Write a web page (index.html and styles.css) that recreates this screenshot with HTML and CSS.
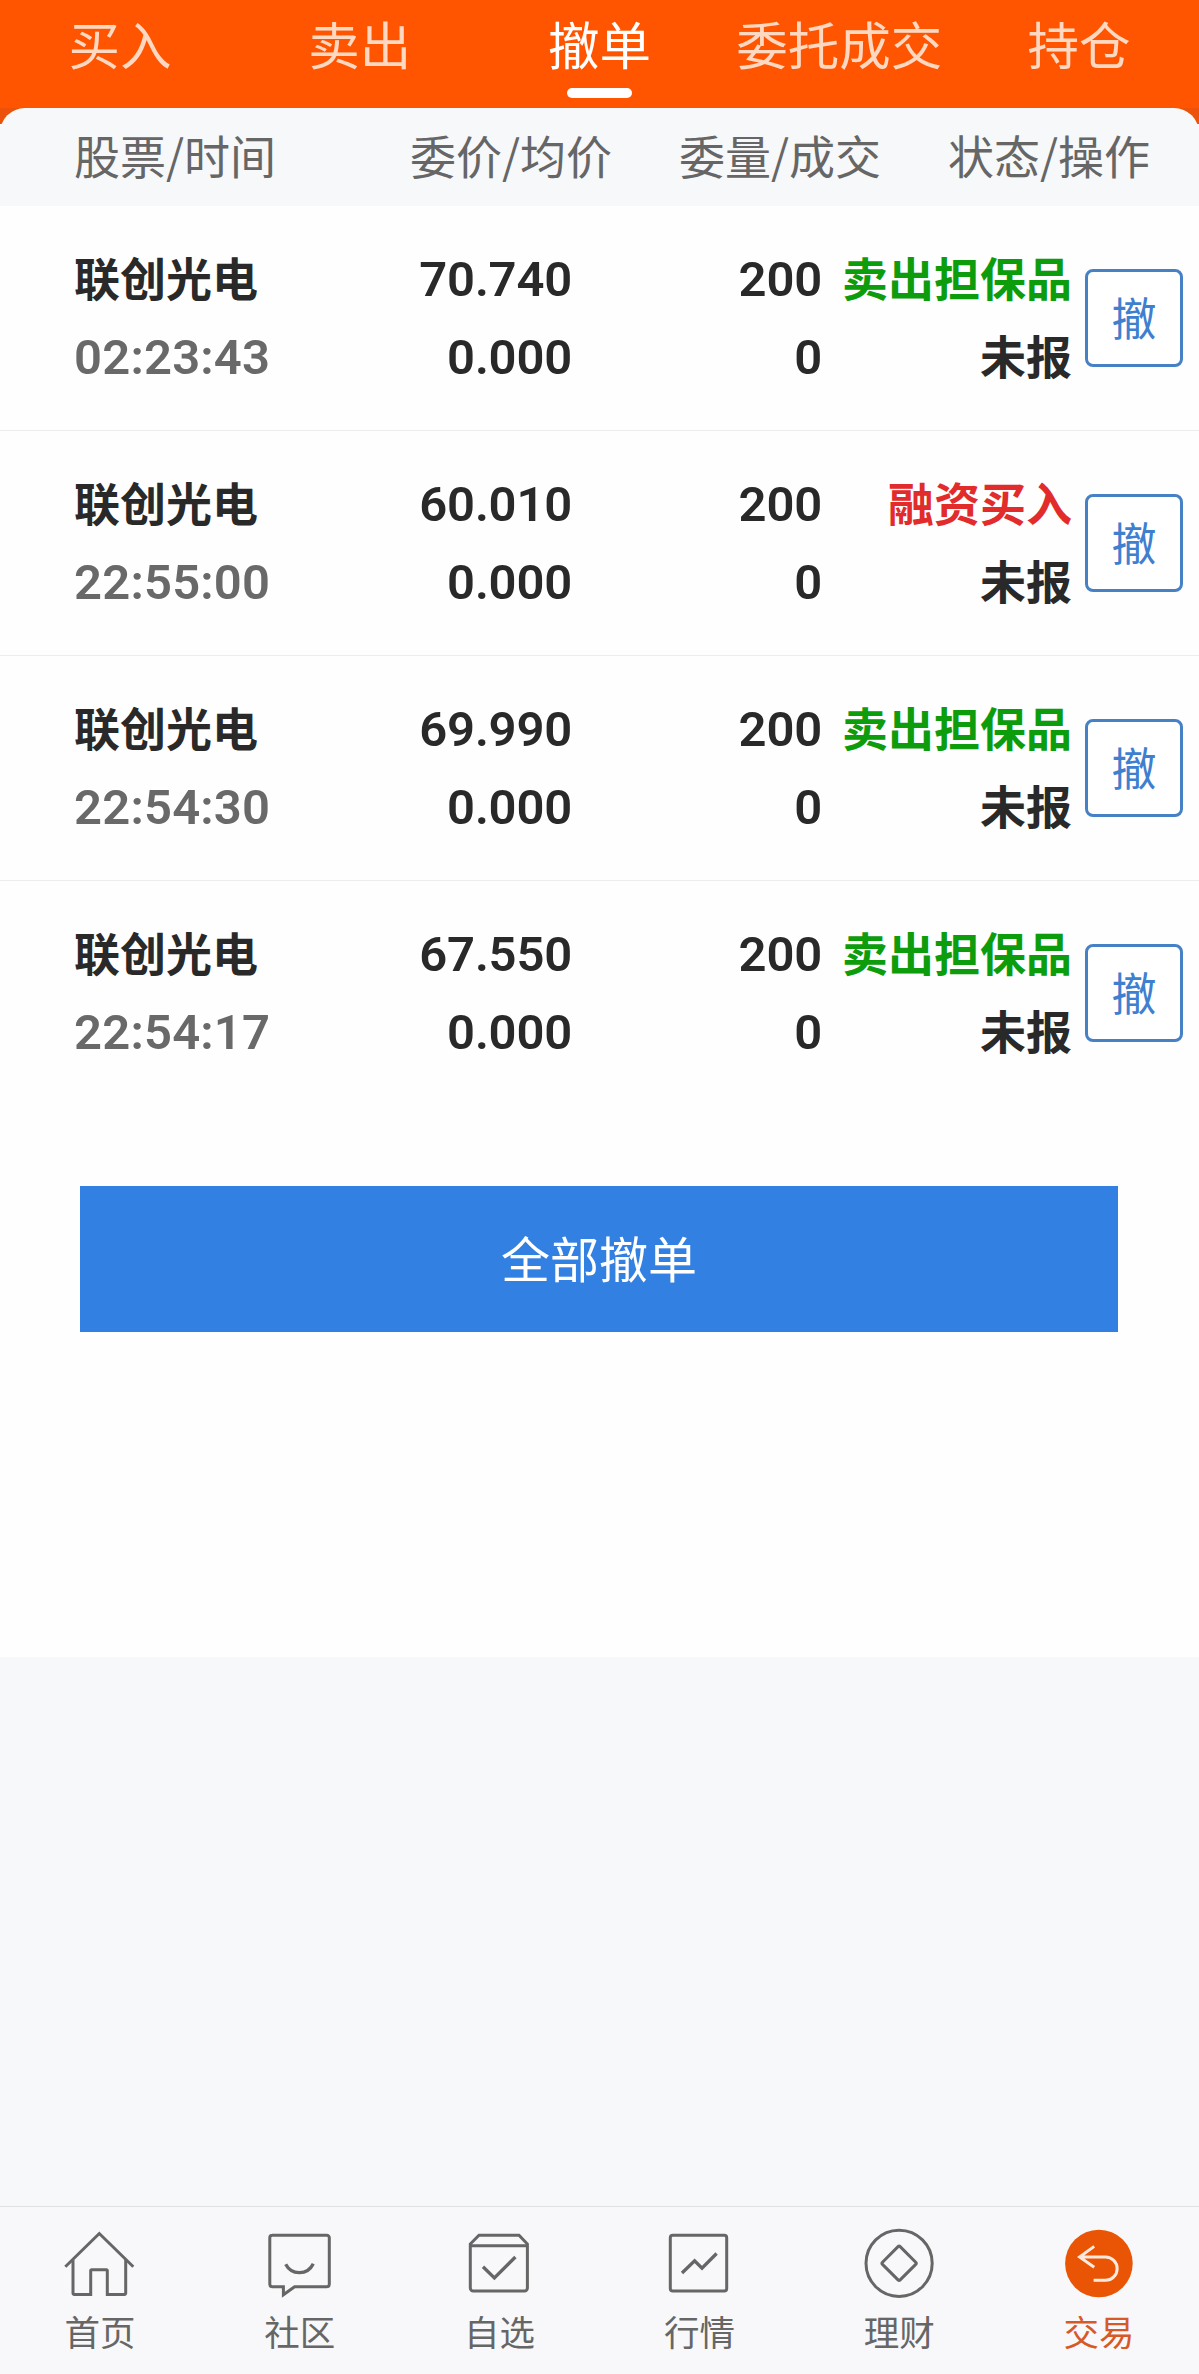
FILE: index.html
```html
<!DOCTYPE html>
<html lang="zh-CN">
<head>
  <meta charset="UTF-8" />
  <meta name="viewport" content="width=device-width, initial-scale=1.0"/>
  <title>撤单</title>
  <link rel="stylesheet" href="styles.css">
</head>
<body>
  <header class="tabs">
    <a class="tab">买入</a>
    <a class="tab">卖出</a>
    <a class="tab active">撤单</a>
    <a class="tab">委托成交</a>
    <a class="tab">持仓</a>
  </header>

  <main>
    <div class="head-wrap">
      <div class="head">
        <span>股票/时间</span>
        <span>委价/均价</span>
        <span>委量/成交</span>
        <span>状态/操作</span>
      </div>
    </div>

    <section class="orders">
      <div class="order">
        <span class="name">联创光电</span>
        <span class="num">70.740</span>
        <span class="num">200</span>
        <span class="status sell">卖出担保品</span>
        <button class="cancel">撤</button>
        <span class="time">02:23:43</span>
        <span class="num">0.000</span>
        <span class="num">0</span>
        <span class="status">未报</span>
      </div>
      <div class="order">
        <span class="name">联创光电</span>
        <span class="num">60.010</span>
        <span class="num">200</span>
        <span class="status buy">融资买入</span>
        <button class="cancel">撤</button>
        <span class="time">22:55:00</span>
        <span class="num">0.000</span>
        <span class="num">0</span>
        <span class="status">未报</span>
      </div>
      <div class="order">
        <span class="name">联创光电</span>
        <span class="num">69.990</span>
        <span class="num">200</span>
        <span class="status sell">卖出担保品</span>
        <button class="cancel">撤</button>
        <span class="time">22:54:30</span>
        <span class="num">0.000</span>
        <span class="num">0</span>
        <span class="status">未报</span>
      </div>
      <div class="order">
        <span class="name">联创光电</span>
        <span class="num">67.550</span>
        <span class="num">200</span>
        <span class="status sell">卖出担保品</span>
        <button class="cancel">撤</button>
        <span class="time">22:54:17</span>
        <span class="num">0.000</span>
        <span class="num">0</span>
        <span class="status">未报</span>
      </div>
      <button class="cancel-all">全部撤单</button>
    </section>
  </main>

  <nav class="bottom-nav">
    <a class="nav-item">
      <svg viewBox="0 0 80 80">
        <path d="M5.3 46.7 39.3 13.5 73.3 46.7"/>
        <path d="M13 40V73.2a1.3 1.3 0 0 0 1.3 1.3H30.7V50.8a1 1 0 0 1 1-1H46.3a1 1 0 0 1 1 1V74.5H64.4a1.3 1.3 0 0 0 1.3-1.3V40"/>
      </svg>
      <span>首页</span>
    </a>
    <a class="nav-item">
      <svg viewBox="0 0 80 80">
        <path d="M12 15.3H66.8a2.5 2.5 0 0 1 2.5 2.5V64.2a2.5 2.5 0 0 1-2.5 2.5H34.6L23.4 74.8V66.7H12.3a2.5 2.5 0 0 1-2.5-2.5V17.8a2.5 2.5 0 0 1 2.5-2.5z"/>
        <path class="thick" d="M25.7 44.3C31.5 55.5 47.5 55.5 53.3 43.7"/>
      </svg>
      <span>社区</span>
    </a>
    <a class="nav-item">
      <svg viewBox="0 0 80 80">
        <path d="M10.3 24 19 15.2H59L67.4 24V68a3 3 0 0 1-3 3H13.3a3 3 0 0 1-3-3z"/>
        <path d="M10.3 25.8H67.4"/>
        <path class="thick" d="M23 46.8 34.4 58 55.4 37"/>
      </svg>
      <span>自选</span>
    </a>
    <a class="nav-item">
      <svg viewBox="0 0 80 80">
        <rect x="11.3" y="15.2" width="56.4" height="55.8" rx="2.5"/>
        <path class="thick" d="M23 53 35.6 40.8 43 48.2 57.6 33.5"/>
      </svg>
      <span>行情</span>
    </a>
    <a class="nav-item">
      <svg viewBox="0 0 80 80">
        <circle cx="40.1" cy="43.3" r="33.1"/>
        <rect x="27.6" y="30.8" width="25" height="25" rx="1.5" transform="rotate(45 40.1 43.3)"/>
      </svg>
      <span>理财</span>
    </a>
    <a class="nav-item current">
      <svg viewBox="0 0 80 80">
        <circle class="disc" cx="39.9" cy="43.5" r="33.8"/>
        <path class="arrow" d="M35.2 26.4 20.6 37 35.2 47.3M20.6 37H46.5a11.65 11.65 0 0 1 0 23.3H34.6"/>
      </svg>
      <span>交易</span>
    </a>
  </nav>
</body>
</html>
```

FILE: styles.css
```css
* { box-sizing: border-box; }
body {
  margin: 0;
  min-height: 2374px;
  display: flex;
  flex-direction: column;
  background: #f6f8fa;
  color: #292929;
  font-family: "Noto Sans CJK SC", sans-serif;
}
button { font-family: inherit; padding: 0; }

/* top tabs */
.tabs { display: flex; height: 108px; background: #ff5500; }
.tab {
  flex: 1;
  display: flex;
  flex-direction: column;
  align-items: center;
  height: 98px;
  font-size: 51.5px;
  line-height: 86px;
  color: #ffd8c2;
  white-space: nowrap;
}
.tab.active { color: #fff; }
.tab.active::after { content: ""; width: 65px; height: 10px; margin-top: 2px; border-radius: 5px; background: #fff; }

/* column titles */
.head-wrap { background: linear-gradient(#ed520a 16px, #f6f8fa 16px); }
.head {
  display: grid;
  grid-template-columns: 336px 269px 269px auto;
  height: 98px;
  padding-left: 74px;
  border-radius: 25px 25px 0 0;
  background: #f6f8fa;
  color: #666;
  font-size: 46px;
  line-height: 92px;
}

/* order list */
.orders { height: 1451px; background: #fefefe; }
.order {
  display: grid;
  grid-template-columns: 248px 250px 250px 250px 98px;
  grid-template-rows: 78px 78px;
  height: 225px;
  padding: 31px 0 0 74px;
  border-bottom: 1px solid #ededed;
  font-size: 46px;
  font-weight: 700;
  line-height: 78px;
  white-space: nowrap;
}
.order:nth-of-type(4) { border-bottom: 0; }
.num, .time {
  padding-top: 4px;
  font-family: Roboto, sans-serif;
  font-size: 49px;
  font-weight: 600;
  letter-spacing: -0.2px;
}
.num, .status { text-align: right; }
.time { color: #696969; letter-spacing: 0.2px; }
.sell { color: #0c9c0c; }
.buy { color: #e22b2b; }
.cancel {
  grid-column: 5;
  grid-row: 1 / 3;
  align-self: center;
  width: 98px;
  height: 98px;
  margin: 6px 0 0 13px;
  border: 3px solid #4681c6;
  border-radius: 8px;
  background: #fff;
  color: #3f7fd0;
  font-size: 45px;
  line-height: 88px;
  padding-bottom: 2px;
}
.cancel-all {
  display: block;
  width: 1038px;
  height: 146px;
  margin: 80px 0 0 80px;
  padding-bottom: 5px;
  border: 0;
  background: #3280e2;
  color: #fff;
  font-size: 49px;
}

/* bottom navigation */
.bottom-nav {
  display: flex;
  height: 168px;
  margin-top: auto;
  border-top: 1px solid #e0e0e2;
  background: #f8f8fa;
}
.nav-item {
  flex: 1;
  display: flex;
  flex-direction: column;
  align-items: center;
  padding-top: 13px;
  color: #666;
  font-size: 35.5px;
  line-height: 62px;
}
.nav-item svg { width: 80px; height: 80px; fill: none; stroke: #666; stroke-width: 3; }
.nav-item .thick { stroke-width: 3.3; }
.nav-item .disc { fill: #e95504; stroke: none; }
.nav-item .arrow { stroke: #ffe9dc; stroke-width: 3; }
.current { color: #d75a26; }
```
